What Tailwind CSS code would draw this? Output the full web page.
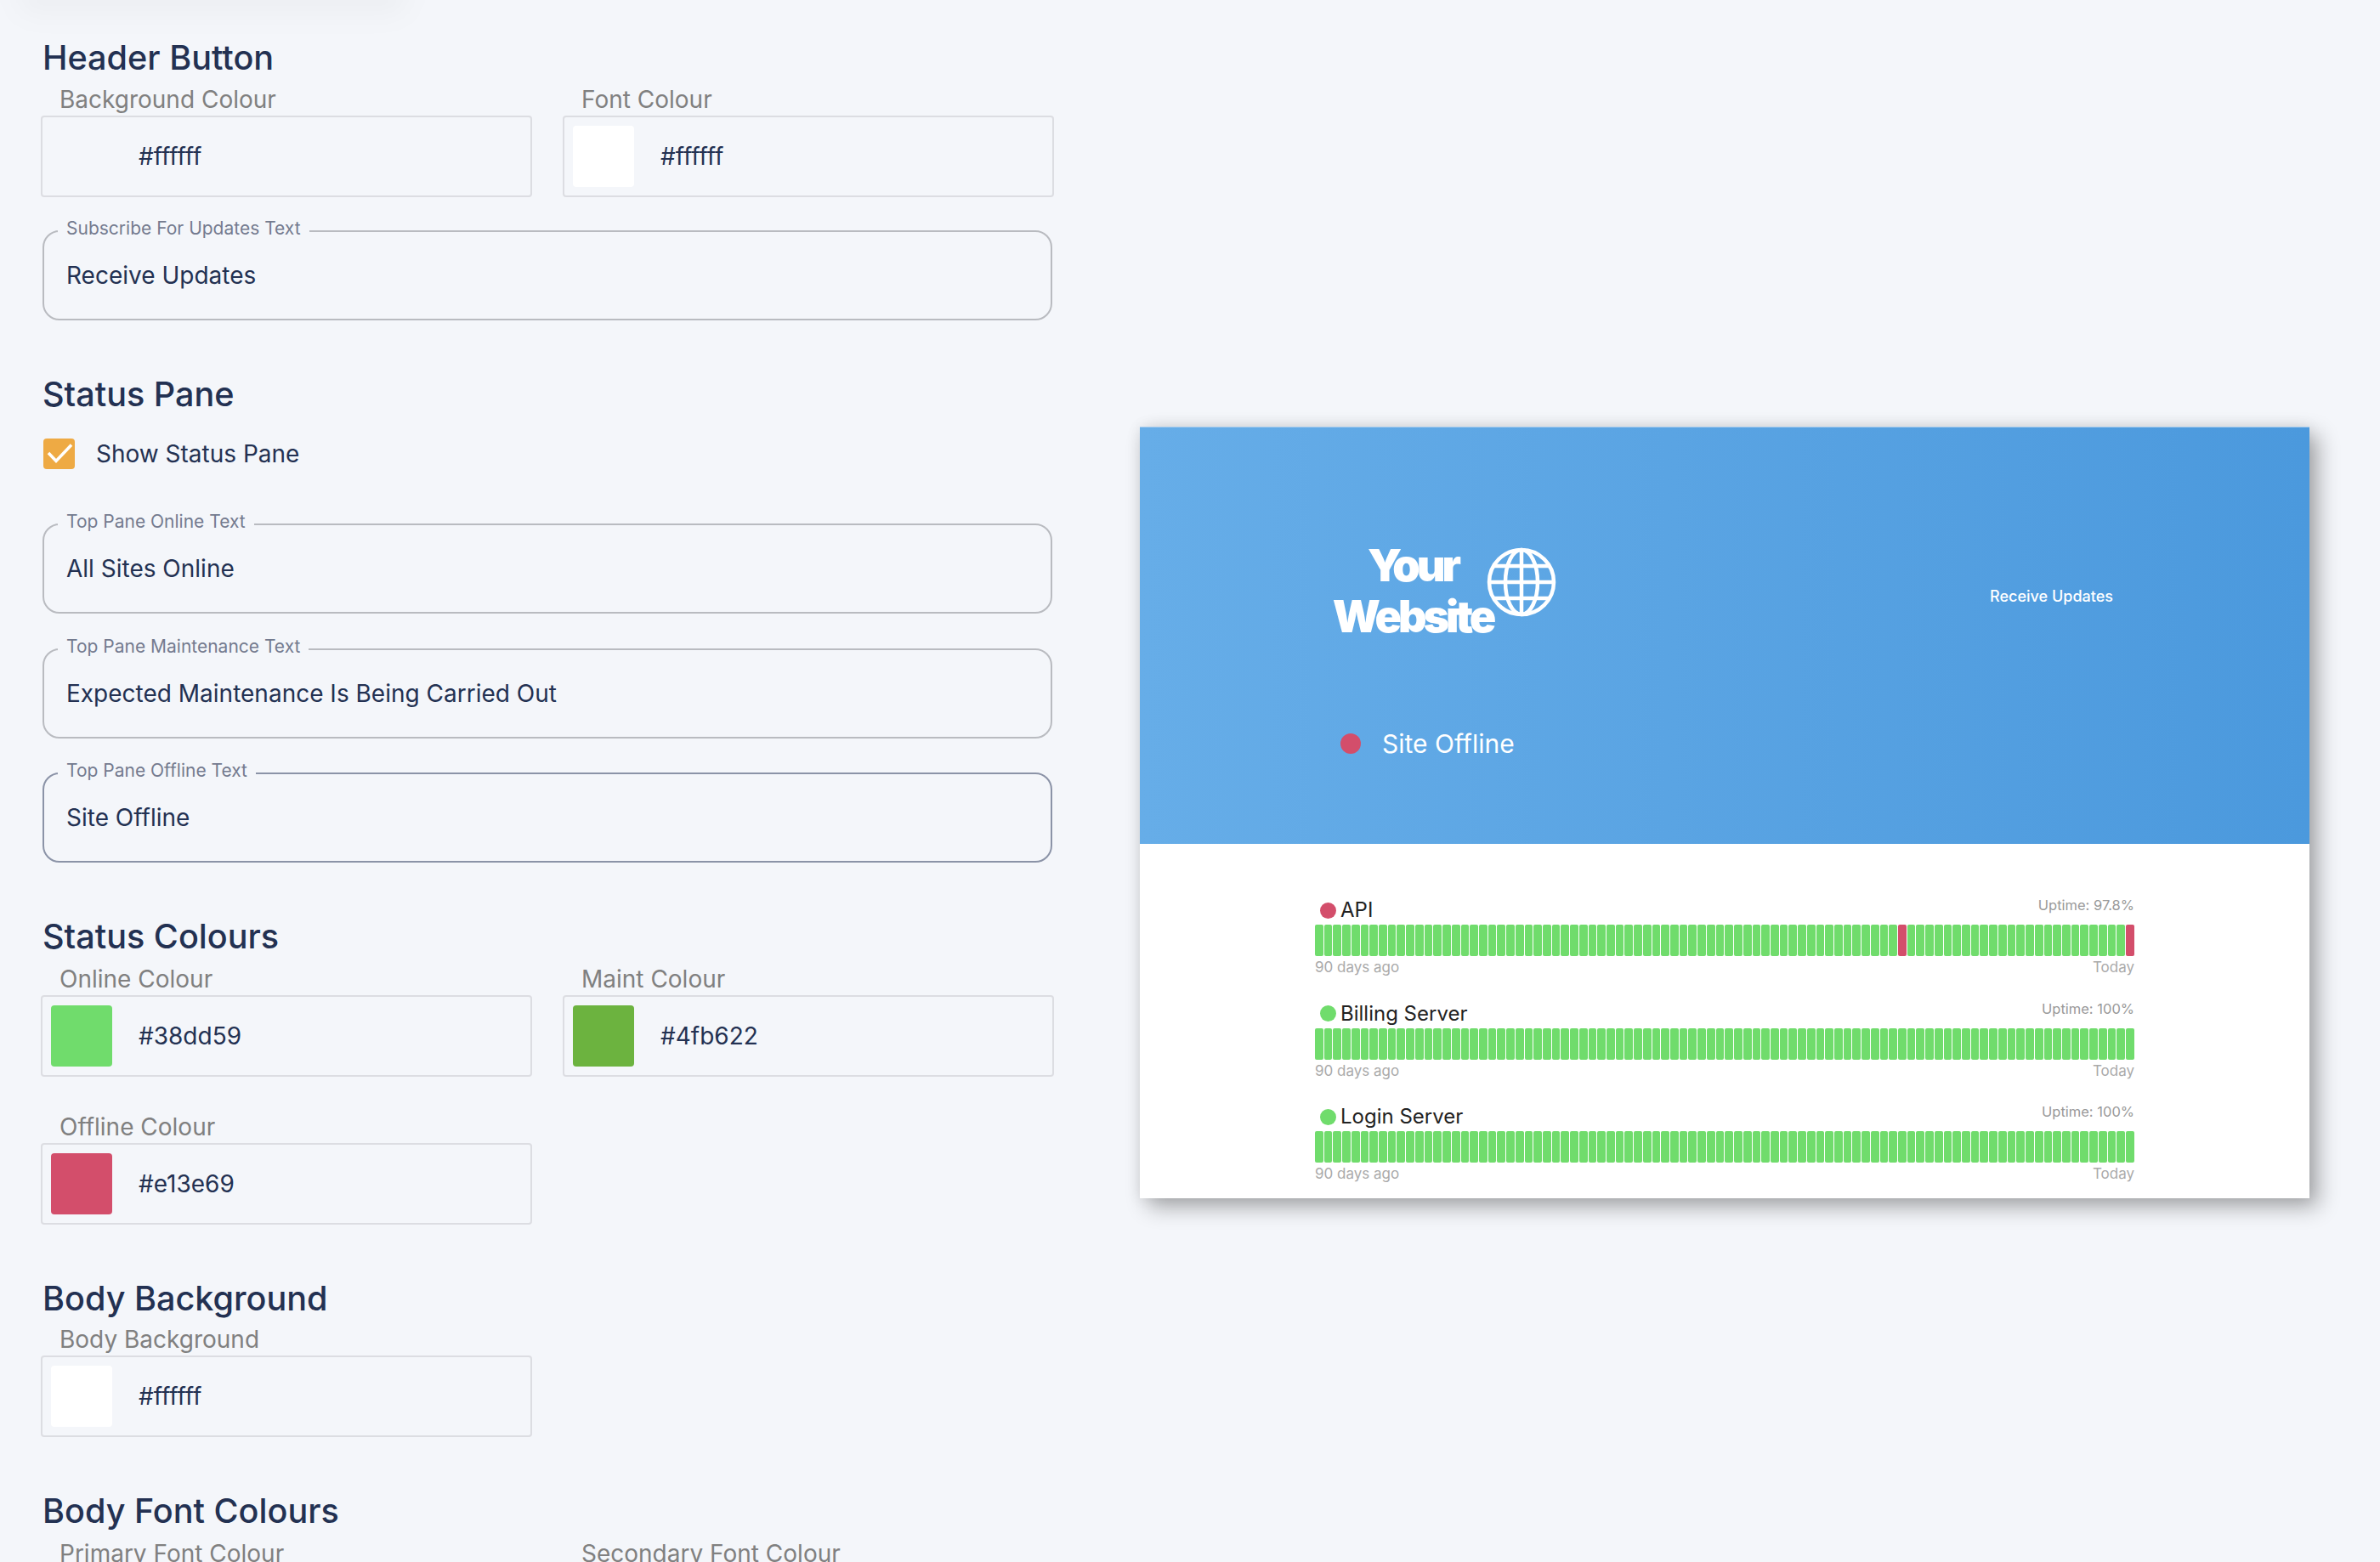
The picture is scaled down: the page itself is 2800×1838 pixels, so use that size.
<!DOCTYPE html>
<html lang="en">
<head>
    <meta charset="UTF-8">
    <title>Status Page Settings</title>
    <script src="https://cdn.jsdelivr.net/npm/@tailwindcss/browser@4"></script>
</head>
<body class="bg-[#f4f6fa] font-['Inter','Liberation_Sans',sans-serif]">
    <div class="relative flex h-[1838px] w-[2800px] overflow-hidden">
        <div class="absolute -top-[24px] left-[20px] w-[460px] h-[40px] rounded-full bg-black/[3%] blur-lg"></div>

        <!-- settings form -->
        <div class="w-[1240px] shrink-0 pl-[48px] pt-[44px]">
            <h2 class="text-[39.6px] leading-[48px] font-medium text-[#233152] pl-[2px] mb-[12px]">Header Button</h2>
            <div class="grid grid-cols-2 gap-x-[36px]">
                <div>
                    <div class="h-[32px] pl-[22px] text-[28px] leading-[26px] text-[#808080]">Background Colour</div>
                    <div class="h-[96px] border-2 border-[#dcdde2] rounded-[4px] flex items-center pl-[10px]">
                        <div class="w-[72px] h-[72px] rounded-[4px] bg-[#f4f6fa]"></div>
                        <span class="ml-[31px] text-[28px] text-[#233152]">#ffffff</span>
                    </div>
                </div>
                <div>
                    <div class="h-[32px] pl-[22px] text-[28px] leading-[26px] text-[#808080]">Font Colour</div>
                    <div class="h-[96px] border-2 border-[#dcdde2] rounded-[4px] flex items-center pl-[10px]">
                        <div class="w-[72px] h-[72px] rounded-[4px] bg-white"></div>
                        <span class="ml-[31px] text-[28px] text-[#233152]">#ffffff</span>
                    </div>
                </div>
            </div>
            <fieldset class="mt-[27px] ml-[2px] w-[1188px] h-[118px] border-2 border-[#b9bbc0] rounded-[20px] px-[26px]">
                <legend class="relative -top-[3px] px-[10px] -ml-[10px] text-[21px] leading-[26px] text-[#747b8f]">Subscribe For Updates Text</legend>
                <div class="pt-[19px] text-[28px] leading-[40px] text-[#233152]">Receive Updates</div>
            </fieldset>

            <h2 class="mt-[63px] text-[39.6px] leading-[48px] font-medium text-[#233152] pl-[2px]">Status Pane</h2>
            <div class="mt-[28px] ml-[3px] flex items-center h-[36px]">
                <div class="w-[37px] h-[36px] rounded-[4px] bg-[#eeaa44]">
                    <svg class="w-[37px] h-[36px]" viewBox="0 0 37 36" fill="none" stroke="white" stroke-width="3.5"><path d="M6 17l9 9.5L33 7.5"/></svg>
                </div>
                <span class="ml-[25px] text-[28px] text-[#233152]">Show Status Pane</span>
            </div>

            <fieldset class="mt-[52px] ml-[2px] w-[1188px] h-[118px] border-2 border-[#b9bbc0] rounded-[20px] px-[26px]">
                <legend class="relative -top-[3px] px-[10px] -ml-[10px] text-[21px] leading-[26px] text-[#747b8f]">Top Pane Online Text</legend>
                <div class="pt-[19px] text-[28px] leading-[40px] text-[#233152]">All Sites Online</div>
            </fieldset>
            <fieldset class="mt-[29px] ml-[2px] w-[1188px] h-[118px] border-2 border-[#b9bbc0] rounded-[20px] px-[26px]">
                <legend class="relative -top-[3px] px-[10px] -ml-[10px] text-[21px] leading-[26px] text-[#747b8f]">Top Pane Maintenance Text</legend>
                <div class="pt-[19px] text-[28px] leading-[40px] text-[#233152]">Expected Maintenance Is Being Carried Out</div>
            </fieldset>
            <fieldset class="mt-[28px] ml-[2px] w-[1188px] h-[118px] border-2 border-[#8b93a7] rounded-[20px] px-[26px]">
                <legend class="relative -top-[3px] px-[10px] -ml-[10px] text-[21px] leading-[26px] text-[#747b8f]">Top Pane Offline Text</legend>
                <div class="pt-[19px] text-[28px] leading-[40px] text-[#233152]">Site Offline</div>
            </fieldset>

            <h2 class="mt-[63px] text-[39.6px] leading-[48px] font-medium text-[#233152] pl-[2px] mb-[13px]">Status Colours</h2>
            <div class="grid grid-cols-2 gap-x-[36px] gap-y-[46px]">
                <div>
                    <div class="h-[32px] pl-[22px] text-[28px] leading-[26px] text-[#808080]">Online Colour</div>
                    <div class="h-[96px] border-2 border-[#dcdde2] rounded-[4px] flex items-center pl-[10px]">
                        <div class="w-[72px] h-[72px] rounded-[4px] bg-[#70dc6c]"></div>
                        <span class="ml-[31px] text-[28px] text-[#233152]">#38dd59</span>
                    </div>
                </div>
                <div>
                    <div class="h-[32px] pl-[22px] text-[28px] leading-[26px] text-[#808080]">Maint Colour</div>
                    <div class="h-[96px] border-2 border-[#dcdde2] rounded-[4px] flex items-center pl-[10px]">
                        <div class="w-[72px] h-[72px] rounded-[4px] bg-[#6cb33f]"></div>
                        <span class="ml-[31px] text-[28px] text-[#233152]">#4fb622</span>
                    </div>
                </div>
                <div>
                    <div class="h-[32px] pl-[22px] text-[28px] leading-[26px] text-[#808080]">Offline Colour</div>
                    <div class="h-[96px] border-2 border-[#dcdde2] rounded-[4px] flex items-center pl-[10px]">
                        <div class="w-[72px] h-[72px] rounded-[4px] bg-[#d34e6b]"></div>
                        <span class="ml-[31px] text-[28px] text-[#233152]">#e13e69</span>
                    </div>
                </div>
            </div>

            <h2 class="mt-[63px] text-[39.6px] leading-[48px] font-medium text-[#233152] pl-[2px] mb-[11px]">Body Background</h2>
            <div class="grid grid-cols-2 gap-x-[36px]">
                <div>
                    <div class="h-[32px] pl-[22px] text-[28px] leading-[26px] text-[#808080]">Body Background</div>
                    <div class="h-[96px] border-2 border-[#dcdde2] rounded-[4px] flex items-center pl-[10px]">
                        <div class="w-[72px] h-[72px] rounded-[4px] bg-white"></div>
                        <span class="ml-[31px] text-[28px] text-[#233152]">#ffffff</span>
                    </div>
                </div>
            </div>

            <h2 class="mt-[63px] text-[39.6px] leading-[48px] font-medium text-[#233152] pl-[2px] mb-[13px]">Body Font Colours</h2>
            <div class="grid grid-cols-2 gap-x-[36px]">
                <div class="pl-[22px] text-[28px] leading-[26px] text-[#808080]">Primary Font Colour</div>
                <div class="pl-[22px] text-[28px] leading-[26px] text-[#808080]">Secondary Font Colour</div>
            </div>
        </div>

        <!-- live preview -->
        <div class="ml-[101px] mt-[502px] w-[1376px] h-[908px] shrink-0 bg-white shadow-[10px_10px_24px_rgba(0,0,0,0.32),0_0_16px_rgba(0,0,0,0.08)]">
            <div class="h-[491px] border-t border-[#a9cdee] bg-gradient-to-r from-[#66ade8] to-[#4b99dd] pl-[226px] pr-[231px] pt-[133px]">
                <div class="flex justify-between items-start">
                    <div class="flex items-start">
                        <div class="w-[190px] text-center text-white font-black text-[52px] leading-[60px] tracking-[-4px]">Your Website</div>
                        <svg class="w-[84px] h-[84px] -ml-[9px] mt-[7px]" viewBox="0 0 84 84" fill="none" stroke="white" stroke-width="4.5">
                            <circle cx="42" cy="42" r="38"/>
                            <ellipse cx="42" cy="42" rx="19" ry="38"/>
                            <path d="M42 4v76M9 23h66M4 42h76M9 61h66"/>
                        </svg>
                    </div>
                    <span class="mt-[54px] text-white text-[18px] leading-[24px] font-medium">Receive Updates</span>
                </div>
                <div class="mt-[99px] flex items-center ml-[10px]">
                    <div class="w-[24px] h-[24px] rounded-full bg-[#d34e6b]"></div>
                    <span class="ml-[25px] text-[30px] leading-[40px] text-white">Site Offline</span>
                </div>
            </div>
            <div class="pt-[61px] px-[206px]">
                <div class="flex flex-col gap-y-[24.5px]">
                    <div data-row="64,89">
                        <div class="h-[34px] flex justify-between items-start">
                            <div class="flex items-center h-[34px] pl-[6px]">
                                <div class="w-[19px] h-[19px] rounded-full bg-[#d34e6b]"></div>
                                <span class="ml-[5px] text-[24px] text-[#222]">API</span>
                            </div>
                            <span class="text-[16.5px] leading-[22px] text-[#999]">Uptime: 97.8%</span>
                        </div>
                        <div class="bars flex gap-[1px] h-[37px]"></div>
                        <div class="flex justify-between h-[26px] text-[17px] leading-[26px] text-[#aaa]"><span>90 days ago</span><span>Today</span></div>
                    </div>
                    <div data-row="">
                        <div class="h-[34px] flex justify-between items-start">
                            <div class="flex items-center h-[34px] pl-[6px]">
                                <div class="w-[19px] h-[19px] rounded-full bg-[#70dc6c]"></div>
                                <span class="ml-[5px] text-[24px] text-[#222]">Billing Server</span>
                            </div>
                            <span class="text-[16.5px] leading-[22px] text-[#999]">Uptime: 100%</span>
                        </div>
                        <div class="bars flex gap-[1px] h-[37px]"></div>
                        <div class="flex justify-between h-[26px] text-[17px] leading-[26px] text-[#aaa]"><span>90 days ago</span><span>Today</span></div>
                    </div>
                    <div data-row="">
                        <div class="h-[34px] flex justify-between items-start">
                            <div class="flex items-center h-[34px] pl-[6px]">
                                <div class="w-[19px] h-[19px] rounded-full bg-[#70dc6c]"></div>
                                <span class="ml-[5px] text-[24px] text-[#222]">Login Server</span>
                            </div>
                            <span class="text-[16.5px] leading-[22px] text-[#999]">Uptime: 100%</span>
                        </div>
                        <div class="bars flex gap-[1px] h-[37px]"></div>
                        <div class="flex justify-between h-[26px] text-[17px] leading-[26px] text-[#aaa]"><span>90 days ago</span><span>Today</span></div>
                    </div>
                </div>
            </div>
        </div>
    </div>

    <script>
        // 90 daily uptime ticks per service
        document.querySelectorAll('[data-row]').forEach(row => {
            const down = row.dataset.row.split(',').map(Number);
            const bars = row.querySelector('.bars');
            for (let i = 0; i < 90; i++) {
                const tick = document.createElement('div');
                tick.className = row.dataset.row && down.includes(i)
                    ? 'flex-1 rounded-[2px] bg-[#d34e6b]'
                    : 'flex-1 rounded-[2px] bg-[#70dc6c]';
                bars.appendChild(tick);
            }
        });
    </script>
</body>
</html>
